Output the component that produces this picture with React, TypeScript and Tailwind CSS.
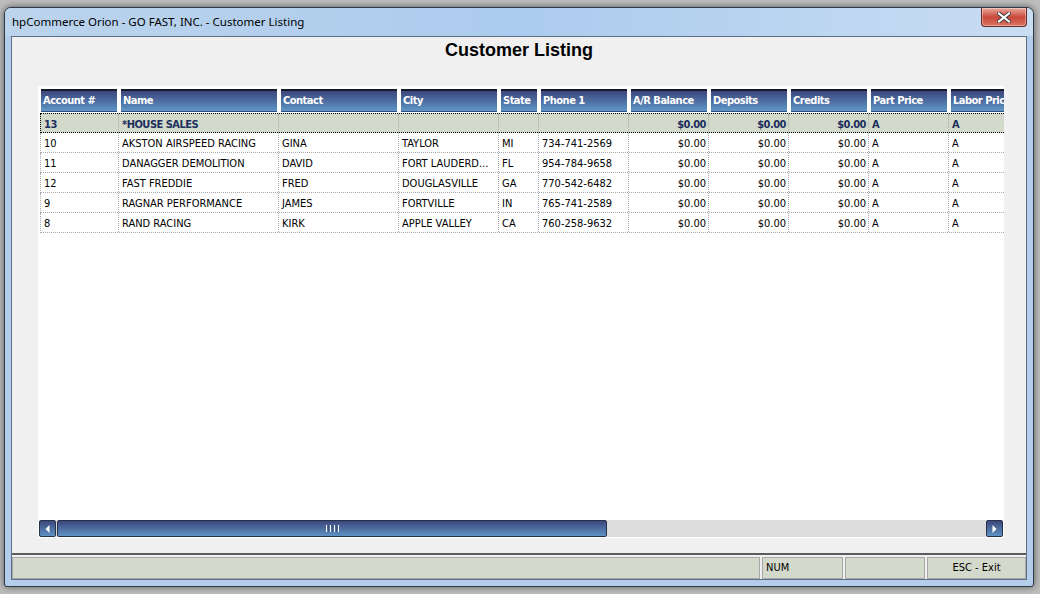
import React from "react";

type Col = { label: string; w: string; right?: boolean };

const cols: Col[] = [
  { label: "Account #", w: "w-[78px]" },
  { label: "Name", w: "w-[160px]" },
  { label: "Contact", w: "w-[120px]" },
  { label: "City", w: "w-[100px]" },
  { label: "State", w: "w-[40px]" },
  { label: "Phone 1", w: "w-[90px]" },
  { label: "A/R Balance", w: "w-[80px]", right: true },
  { label: "Deposits", w: "w-[80px]", right: true },
  { label: "Credits", w: "w-[80px]", right: true },
  { label: "Part Price", w: "w-[80px]" },
  { label: "Labor Price", w: "w-[80px]" },
];

const rows: string[][] = [
  ["13", "*HOUSE SALES", "", "", "", "", "$0.00", "$0.00", "$0.00", "A", "A"],
  ["10", "AKSTON AIRSPEED RACING", "GINA", "TAYLOR", "MI", "734-741-2569", "$0.00", "$0.00", "$0.00", "A", "A"],
  ["11", "DANAGGER DEMOLITION", "DAVID", "FORT LAUDERD...", "FL", "954-784-9658", "$0.00", "$0.00", "$0.00", "A", "A"],
  ["12", "FAST FREDDIE", "FRED", "DOUGLASVILLE", "GA", "770-542-6482", "$0.00", "$0.00", "$0.00", "A", "A"],
  ["9", "RAGNAR PERFORMANCE", "JAMES", "FORTVILLE", "IN", "765-741-2589", "$0.00", "$0.00", "$0.00", "A", "A"],
  ["8", "RAND RACING", "KIRK", "APPLE VALLEY", "CA", "760-258-9632", "$0.00", "$0.00", "$0.00", "A", "A"],
];

const gridFont = {
  fontFamily: '"DejaVu Sans Condensed", "DejaVu Sans", "Liberation Sans", sans-serif',
};

export default function App() {
  return (
    <div className="w-[1040px] h-[594px] bg-[#bdbdbd] pt-[7px] pl-[4px] overflow-hidden">
      <div className="relative w-[1030px] h-[580px] border border-[#2e3a48] rounded-t-[7px] rounded-b-[3px] bg-[#b3cdea] flex flex-col shadow-[0_0_7px_rgba(0,0,0,0.55)]">
        {/* Title bar */}
        <div className="h-[28px] shrink-0 flex items-center pl-[7px] rounded-t-[6px] bg-linear-to-r from-[#bcd4ec] via-[#abcbee] to-[#c9ddf3]">
          <span
            className="text-[11.5px] text-black leading-none"
            style={{ fontFamily: '"Noto Sans", "Open Sans", sans-serif' }}
          >
            hpCommerce Orion - GO FAST, INC. - Customer Listing
          </span>
        </div>
        {/* Close button */}
        <div className="absolute top-0 right-[6px] w-[46px] h-[19px] rounded-b-[4px] border border-t-0 border-[#6e2a24] bg-linear-to-b from-[#e9a99e] via-[#c8473b] to-[#d87463] flex items-center justify-center shadow-[inset_0_0_0_1px_rgba(255,255,255,0.35)]">
          <svg width="14" height="11" viewBox="0 0 14 11">
            <path d="M2 1.5 L12 9.5 M12 1.5 L2 9.5" stroke="#3b3b3b" strokeWidth="4" strokeLinecap="square" />
            <path d="M2 1.5 L12 9.5 M12 1.5 L2 9.5" stroke="#ffffff" strokeWidth="2.2" strokeLinecap="square" />
          </svg>
        </div>

        {/* Client area */}
        <div className="mx-[6px] h-[544px] shrink-0 border border-[#5e6f86] bg-[#f0f0f0] flex flex-col">
          {/* Heading */}
          <div className="h-[49px] shrink-0 pt-[2px] flex justify-center">
            <span
              className="text-[18px] leading-[22px] font-bold text-black"
              style={{ fontFamily: '"Liberation Sans", Arial, sans-serif' }}
            >
              Customer Listing
            </span>
          </div>

          {/* Grid */}
          <div
            className="ml-[26px] w-[966px] h-[452px] shrink-0 bg-white overflow-hidden flex flex-col"
            style={gridFont}
          >
            {/* Header */}
            <div className="mt-[3px] h-[23px] shrink-0 flex pl-[3px] whitespace-nowrap">
              {cols.map((c, i) => (
                <div key={i} className={`${c.w} shrink-0 h-full flex`}>
                  <div
                    className={`${i === 0 ? "ml-0" : "ml-[2px]"} mr-[2px] flex-1 h-full border-t-2 border-t-[#161c2b] border-b border-b-[#34527e] bg-linear-to-b from-[#3b467c] to-[#5f97c9] flex items-center pl-[2px] text-white font-bold text-[11px] tracking-[-0.5px] overflow-hidden`}
                  >
                    {c.label}
                  </div>
                </div>
              ))}
            </div>

            {/* Rows */}
            <div className="mt-[1px] pl-[2px] flex flex-col">
              {rows.map((r, ri) => {
                const focused = ri === 0;
                return (
                  <div
                    key={ri}
                    className={
                      focused
                        ? "h-[20px] flex border-l border-y border-dotted border-black bg-[#d3d9cb] text-[#1c2f5c] font-bold tracking-[-0.5px] whitespace-nowrap"
                        : "h-[20px] flex border-l border-b border-dotted border-[#a8a8a8] text-black whitespace-nowrap"
                    }
                  >
                    {cols.map((c, ci) => (
                      <div
                        key={ci}
                        className={`${c.w} shrink-0 h-full border-r border-dotted border-r-[#a8a8a8] flex items-start pt-[4px] leading-[13px] overflow-hidden text-[11px] ${
                          c.right ? "justify-end pr-[2px]" : "pl-[3px]"
                        }`}
                      >
                        {r[ci]}
                      </div>
                    ))}
                  </div>
                );
              })}
            </div>

            <div className="flex-1" />

            {/* Horizontal scrollbar */}
            <div className="ml-[1px] mb-[1px] w-[964px] h-[17px] shrink-0 bg-[#dcdcdc] flex">
              <div className="w-[17px] h-full rounded-[2px] border border-[#26324a] bg-linear-to-b from-[#3b477b] to-[#5e93c4] flex items-center justify-center">
                <svg width="5" height="8" viewBox="0 0 5 8">
                  <path d="M4.5 0 L0.5 4 L4.5 8 Z" fill="#ffffff" />
                </svg>
              </div>
              <div className="ml-[1px] w-[550px] h-full rounded-[2px] border border-[#26324a] bg-linear-to-b from-[#3b477b] to-[#5e93c4] flex items-center justify-center gap-[1px]">
                <div className="w-[1px] h-[7px] bg-white" />
                <div className="w-[1px] h-[7px] bg-[#3f5586]" />
                <div className="w-[1px] h-[7px] bg-white" />
                <div className="w-[1px] h-[7px] bg-[#3f5586]" />
                <div className="w-[1px] h-[7px] bg-white" />
                <div className="w-[1px] h-[7px] bg-[#3f5586]" />
                <div className="w-[1px] h-[7px] bg-white" />
              </div>
              <div className="flex-1" />
              <div className="w-[17px] h-full rounded-[2px] border border-[#26324a] bg-linear-to-b from-[#3b477b] to-[#5e93c4] flex items-center justify-center">
                <svg width="5" height="8" viewBox="0 0 5 8">
                  <path d="M0.5 0 L4.5 4 L0.5 8 Z" fill="#ffffff" />
                </svg>
              </div>
            </div>
          </div>

          <div className="h-[15px] shrink-0" />

          {/* Status bar */}
          <div
            className="h-[26px] shrink-0 border-t-2 border-[#5c5c5c] pt-[2px] flex text-[11px] text-black"
            style={gridFont}
          >
            <div className="w-[748px] h-[22px] border border-[#a8a8a8] bg-[#d4dacb]" />
            <div className="ml-[2px] w-[81px] h-[22px] border border-[#a8a8a8] bg-[#d4dacb] flex items-center pl-[3px]">
              NUM
            </div>
            <div className="ml-[2px] w-[80px] h-[22px] border border-[#a8a8a8] bg-[#d4dacb]" />
            <div className="ml-[2px] flex-1 h-[22px] border border-[#a8a8a8] bg-[#d4dacb] flex items-center justify-center">
              ESC - Exit
            </div>
          </div>
        </div>
      </div>
    </div>
  );
}
